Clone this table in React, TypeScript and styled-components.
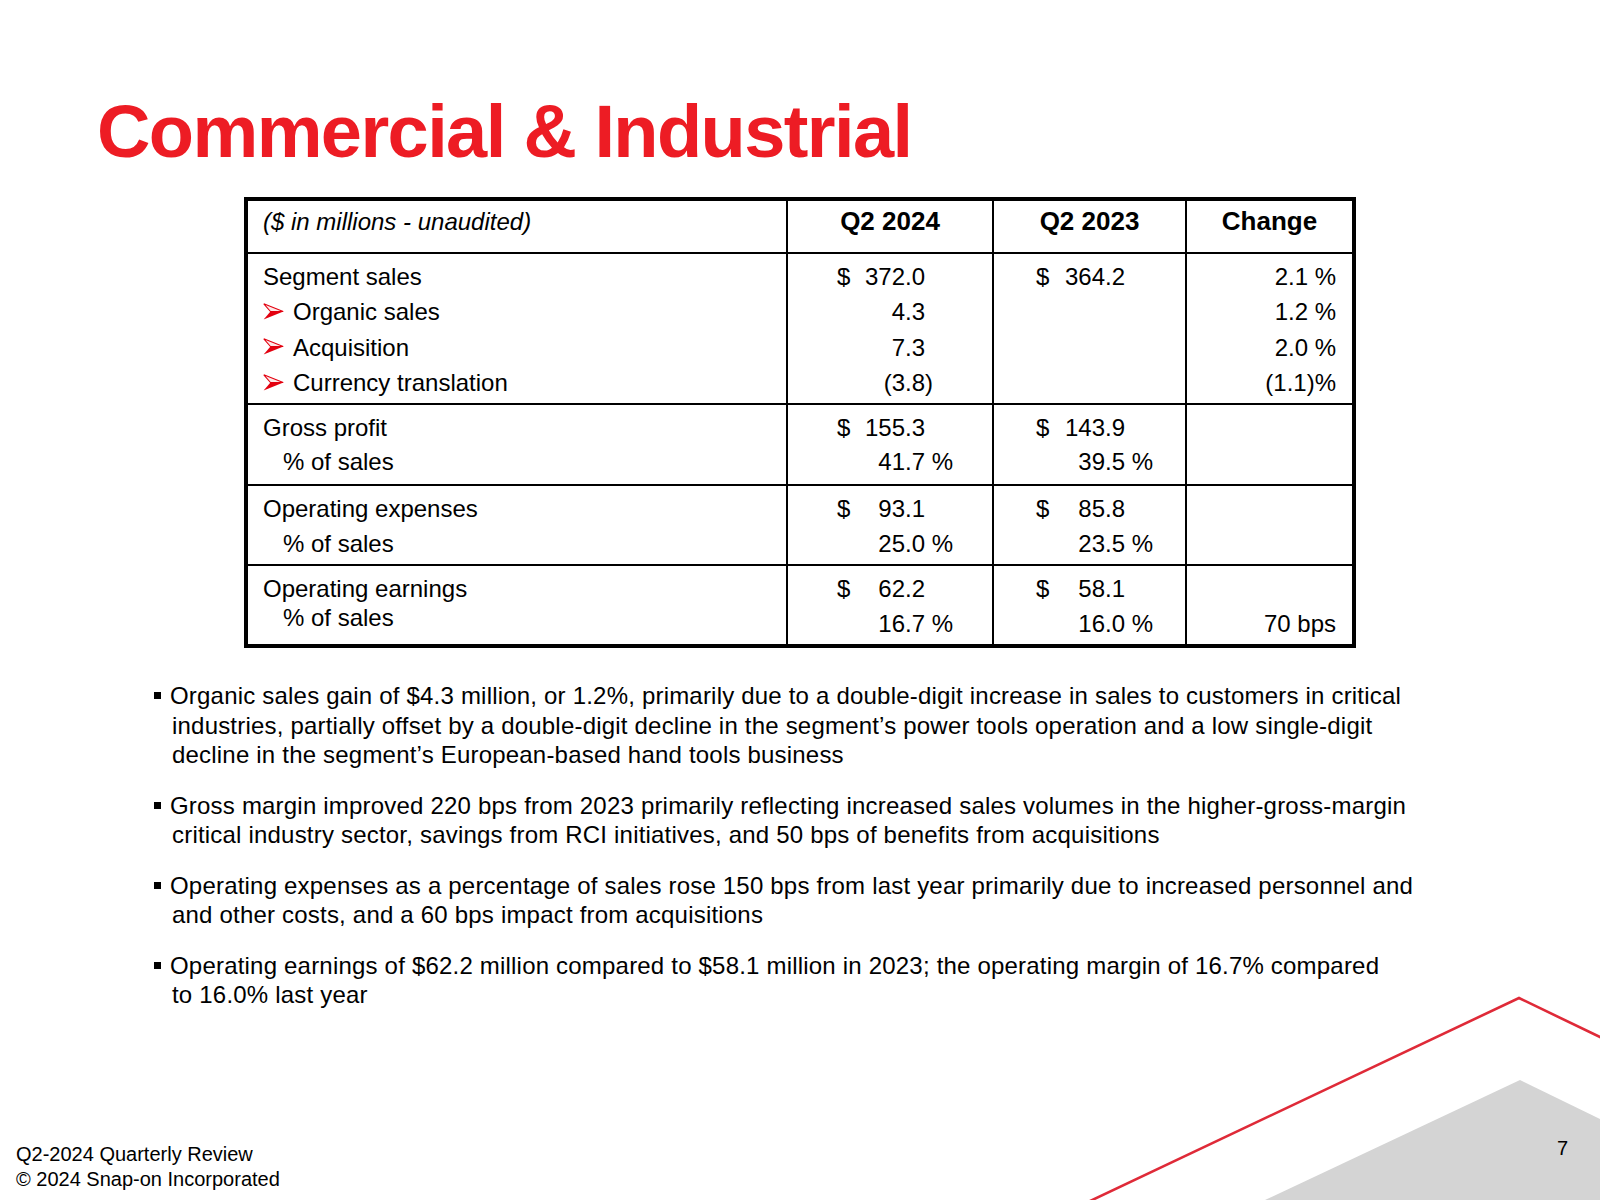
import React from "react";
import styled, { createGlobalStyle } from "styled-components";

const GlobalStyle = createGlobalStyle`
  html, body { margin: 0; padding: 0; background: #ffffff; }
  body { font-family: "Liberation Sans", Arial, Helvetica, sans-serif; color: #000000; }
  * { box-sizing: border-box; }
`;

const Slide = styled.div`
  position: relative;
  width: 1600px;
  height: 1200px;
  overflow: hidden;
  background: #ffffff;
  display: flex;
  flex-direction: column;
`;

const Backdrop = styled.svg`
  position: absolute;
  left: 0;
  top: 0;
  width: 1600px;
  height: 1200px;
  pointer-events: none;
`;

const Title = styled.h1`
  position: relative;
  margin: 95px 0 0 97px;
  font-size: 74px;
  line-height: 74px;
  font-weight: 700;
  color: #ed1c24;
  letter-spacing: -1.6px;
  white-space: nowrap;
`;

const Table = styled.div`
  position: relative;
  margin: 28px 0 0 244px;
  width: 1112px;
  border: 4px solid #000000;
  display: grid;
  grid-template-columns: 540px 206px 193px 165px;
  grid-template-rows: 53px 151px 81px 80px 78px;
  font-size: 24px;
  background: #ffffff;
`;

const Cell = styled.div<{ $lastCol?: boolean; $lastRow?: boolean; $padTop: number }>`
  border-right: ${(p) => (p.$lastCol ? "none" : "2px solid #000")};
  border-bottom: ${(p) => (p.$lastRow ? "none" : "2px solid #000")};
  padding-top: ${(p) => p.$padTop}px;
`;

const HeadLabel = styled.div`
  padding-left: 15px;
  font-style: italic;
  line-height: 30px;
  font-size: 24px;
`;

const HeadTitle = styled.div`
  text-align: center;
  font-weight: 700;
  font-size: 26px;
  line-height: 30px;
`;

const LabelLine = styled.div<{ $lh: number; $indent?: boolean }>`
  display: flex;
  align-items: center;
  gap: 9px;
  height: ${(p) => p.$lh}px;
  padding-left: ${(p) => (p.$indent ? 35 : 15)}px;
  white-space: nowrap;
`;

const ArrowSvg = styled.svg`
  flex: none;
  width: 21px;
  height: 17px;
  margin-top: -2px;
`;

const ValueLine = styled.div<{ $lh: number; $padL: number; $padR: number }>`
  display: flex;
  align-items: center;
  height: ${(p) => p.$lh}px;
  padding-left: ${(p) => p.$padL}px;
  padding-right: ${(p) => p.$padR}px;
  white-space: pre;
`;

const Dollar = styled.span`
  flex: none;
`;

const Num = styled.span`
  flex: 1;
  text-align: right;
`;

const Suffix = styled.span`
  flex: none;
  width: 28px;
  white-space: pre;
`;

const ChangeLine = styled.div<{ $lh: number }>`
  height: ${(p) => p.$lh}px;
  display: flex;
  align-items: center;
  justify-content: flex-end;
  padding-right: 16px;
  white-space: pre;
`;

const Notes = styled.ul`
  position: relative;
  list-style: none;
  margin: 33px 0 0 154px;
  padding: 0;
  display: flex;
  flex-direction: column;
  gap: 21px;
  font-size: 24px;
  line-height: 29.5px;
  letter-spacing: 0.2px;
`;

const Note = styled.li`
  display: flex;
  align-items: flex-start;
`;

const Square = styled.span`
  flex: none;
  width: 7px;
  height: 7px;
  background: #000000;
  margin: 11px 9px 0 0;
`;

const NoteText = styled.div`
  white-space: nowrap;
  padding-left: 2px;
  text-indent: -2px;
`;

const Footer = styled.footer`
  position: relative;
  margin-top: auto;
  display: flex;
  justify-content: space-between;
  align-items: flex-start;
  padding: 0 32px 9px 16px;
`;

const FooterText = styled.div`
  font-size: 20px;
  line-height: 24.5px;
`;

const PageNum = styled.div`
  font-size: 20px;
  line-height: 24px;
  margin-top: -6px;
`;

const Arrowhead = () => (
  <ArrowSvg viewBox="0 0 21 17">
    <path d="M0.8 0.8 L20.2 8.5 L7.5 8.5 Z" fill="#fde8e8" stroke="#e3000f" strokeWidth="1.1" strokeLinejoin="miter" />
    <path d="M7.5 8.5 L20.4 8.5 L0.6 16.4 Z" fill="#e3000f" />
  </ArrowSvg>
);

type Val = { sign?: boolean; num: string; suf?: string };
type Label = { text: string; arrow?: boolean; indent?: boolean };
type Section = {
  pad: number;
  lh: number;
  labelPad: number;
  labelLh: number;
  labels: Label[];
  q24: Val[];
  q23: Val[];
  chg: string[];
};

const sections: Section[] = [
  {
    pad: 5,
    lh: 35.5,
    labelPad: 5,
    labelLh: 35.5,
    labels: [
      { text: "Segment sales" },
      { text: "Organic sales", arrow: true },
      { text: "Acquisition", arrow: true },
      { text: "Currency translation", arrow: true },
    ],
    q24: [{ sign: true, num: "372.0" }, { num: "4.3" }, { num: "7.3" }, { num: "(3.8", suf: ")" }],
    q23: [{ sign: true, num: "364.2" }],
    chg: ["2.1 %", "1.2 %", "2.0 %", "(1.1)%"],
  },
  {
    pad: 5.5,
    lh: 34.5,
    labelPad: 5.5,
    labelLh: 34.5,
    labels: [{ text: "Gross profit" }, { text: "% of sales", indent: true }],
    q24: [{ sign: true, num: "155.3" }, { num: "41.7", suf: " %" }],
    q23: [{ sign: true, num: "143.9" }, { num: "39.5", suf: " %" }],
    chg: [],
  },
  {
    pad: 5,
    lh: 35,
    labelPad: 5,
    labelLh: 35,
    labels: [{ text: "Operating expenses" }, { text: "% of sales", indent: true }],
    q24: [{ sign: true, num: "93.1" }, { num: "25.0", suf: " %" }],
    q23: [{ sign: true, num: "85.8" }, { num: "23.5", suf: " %" }],
    chg: [],
  },
  {
    pad: 5,
    lh: 35.5,
    labelPad: 8,
    labelLh: 29,
    labels: [{ text: "Operating earnings" }, { text: "% of sales", indent: true }],
    q24: [{ sign: true, num: "62.2" }, { num: "16.7", suf: " %" }],
    q23: [{ sign: true, num: "58.1" }, { num: "16.0", suf: " %" }],
    chg: ["", "70 bps"],
  },
];

const ValueCol = ({ vals, lh, padL, padR }: { vals: Val[]; lh: number; padL: number; padR: number }) => (
  <>
    {vals.map((v, i) => (
      <ValueLine key={i} $lh={lh} $padL={padL} $padR={padR}>
        <Dollar>{v.sign ? "$" : ""}</Dollar>
        <Num>{v.num}</Num>
        <Suffix>{v.suf ?? ""}</Suffix>
      </ValueLine>
    ))}
  </>
);

const notes: string[][] = [
  [
    "Organic sales gain of $4.3 million, or 1.2%, primarily due to a double-digit increase in sales to customers in critical",
    "industries, partially offset by a double-digit decline in the segment\u2019s power tools operation and a low single-digit",
    "decline in the segment\u2019s European-based hand tools business",
  ],
  [
    "Gross margin improved 220 bps from 2023 primarily reflecting increased sales volumes in the higher-gross-margin",
    "critical industry sector, savings from RCI initiatives, and 50 bps of benefits from acquisitions",
  ],
  [
    "Operating expenses as a percentage of sales rose 150 bps from last year primarily due to increased personnel and",
    "and other costs, and a 60 bps impact from acquisitions",
  ],
  [
    "Operating earnings of $62.2 million compared to $58.1 million in 2023; the operating margin of 16.7% compared",
    "to 16.0% last year",
  ],
];

export default function App() {
  return (
    <>
      <GlobalStyle />
      <Slide>
        <Backdrop viewBox="0 0 1600 1200">
          <polygon points="1265,1200 1520,1080 1600,1119 1600,1200" fill="#d4d4d4" />
          <polyline points="1088,1202 1519,998 1602,1038" fill="none" stroke="#df2a38" strokeWidth="2.6" />
        </Backdrop>

        <Title>Commercial &amp; Industrial</Title>

        <Table>
          <Cell $padTop={6}>
            <HeadLabel>($ in millions - unaudited)</HeadLabel>
          </Cell>
          <Cell $padTop={5}>
            <HeadTitle>Q2 2024</HeadTitle>
          </Cell>
          <Cell $padTop={5}>
            <HeadTitle>Q2 2023</HeadTitle>
          </Cell>
          <Cell $padTop={5} $lastCol>
            <HeadTitle>Change</HeadTitle>
          </Cell>

          {sections.map((s, si) => {
            const last = si === sections.length - 1;
            return (
              <React.Fragment key={si}>
                <Cell $padTop={s.labelPad} $lastRow={last}>
                  {s.labels.map((l, li) => (
                    <LabelLine key={li} $lh={s.labelLh} $indent={l.indent}>
                      {l.arrow && <Arrowhead />}
                      <span>{l.text}</span>
                    </LabelLine>
                  ))}
                </Cell>
                <Cell $padTop={s.pad} $lastRow={last}>
                  <ValueCol vals={s.q24} lh={s.lh} padL={49} padR={39} />
                </Cell>
                <Cell $padTop={s.pad} $lastRow={last}>
                  <ValueCol vals={s.q23} lh={s.lh} padL={42} padR={32} />
                </Cell>
                <Cell $padTop={s.pad} $lastRow={last} $lastCol>
                  {s.chg.map((c, ci) => (
                    <ChangeLine key={ci} $lh={s.lh}>
                      {c}
                    </ChangeLine>
                  ))}
                </Cell>
              </React.Fragment>
            );
          })}
        </Table>

        <Notes>
          {notes.map((lines, i) => (
            <Note key={i}>
              <Square />
              <NoteText>
                {lines.map((ln, j) => (
                  <React.Fragment key={j}>
                    {j > 0 && <br />}
                    {ln}
                  </React.Fragment>
                ))}
              </NoteText>
            </Note>
          ))}
        </Notes>

        <Footer>
          <FooterText>
            Q2-2024 Quarterly Review
            <br />© 2024 Snap-on Incorporated
          </FooterText>
          <PageNum>7</PageNum>
        </Footer>
      </Slide>
    </>
  );
}
